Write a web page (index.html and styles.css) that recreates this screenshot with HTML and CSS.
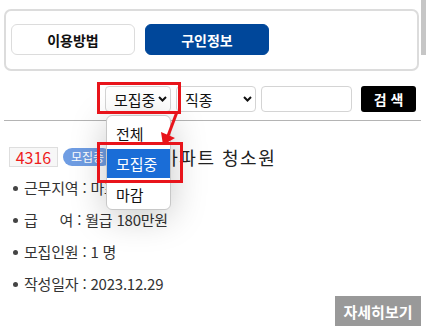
FILE: index.html
```html
<!DOCTYPE html>
<html lang="ko">
<head>
<meta charset="utf-8">
<link rel="stylesheet" href="styles.css">
</head>
<body>
<div class="page">
  <div class="tabs">
    <button class="tab">이용방법</button>
    <button class="tab tab-active">구인정보</button>
  </div>
  <div class="search">
    <div class="sel sel-status"><span>모집중</span><svg class="chev" width="9" height="6" viewBox="0 0 9 6"><path d="M1 1 L4.5 4.5 L8 1" fill="none" stroke="#111" stroke-width="2"/></svg></div>
    <div class="sel sel-job"><span>직종</span><svg class="chev" width="9" height="6" viewBox="0 0 9 6"><path d="M1 1 L4.5 4.5 L8 1" fill="none" stroke="#111" stroke-width="2"/></svg></div>
    <div class="field"></div>
    <button class="btn-search">검 색</button>
  </div>
  <div class="divider"></div>
  <div class="card">
    <div class="card-head">
      <span class="num">4316</span>
      <span class="badge">모집중</span>
      <span class="title">한강변아파트 청소원</span>
    </div>
    <ul class="info">
      <li><span class="dot"></span>근무지역 : 마포구</li>
      <li><span class="dot"></span>급<span class="sp"></span>여 : 월급 180만원</li>
      <li><span class="dot"></span>모집인원 : 1 명</li>
      <li><span class="dot"></span>작성일자 : 2023.12.29</li>
    </ul>
    <div class="card-foot"><button class="more">자세히보기</button></div>
  </div>

  <div class="dropdown">
    <div class="opt">전체</div>
    <div class="opt opt-on">모집중</div>
    <div class="opt">마감</div>
  </div>
  <div class="mark mark-select"></div>
  <div class="mark mark-option"></div>
  <svg class="arrow" width="30" height="40" viewBox="0 0 30 40">
    <line x1="24" y1="0" x2="15" y2="24" stroke="#e8141b" stroke-width="3"/>
    <polygon points="8,20 22,26 10,33" fill="#e8141b"/>
  </svg>
  <div class="scrollbar"></div>
</div>
</body>
</html>
```

FILE: styles.css
```css
* { box-sizing: border-box; }
html, body { margin: 0; padding: 0; background: #fff; }
body {
  font-family: "Noto Sans CJK KR", "Noto Sans", sans-serif;
  color: #333;
  width: 426px;
  height: 332px;
  overflow: hidden;
}
.page { position: relative; width: 426px; height: 332px; padding-top: 9px; }

.tabs {
  margin: 0 7px 0 4px;
  height: 62px;
  border: 2px solid #dcdcdc;
  border-radius: 7px;
  padding: 13px 5px;
  display: flex;
  gap: 10px;
}
.tab {
  width: 124px;
  height: 31px;
  border: 1px solid #dcdcdc;
  border-radius: 6px;
  background: #fff;
  font-family: inherit;
  font-size: 14px;
  font-weight: 700;
  color: #111;
  line-height: 1;
  padding: 0;
}
.tab-active { background: #00479a; border-color: #00479a; color: #fff; }

.search {
  margin-top: 15px;
  padding-right: 10px;
  display: flex;
  justify-content: flex-end;
  align-items: center;
  height: 26px;
}
.sel {
  height: 26px;
  border: 1px solid #d4d4d4;
  border-radius: 4px;
  display: flex;
  align-items: center;
  justify-content: space-between;
  font-size: 15px;
  color: #111;
  line-height: 1;
}
.sel-status { width: 66px; padding: 0 3px 0 8px; }
.sel-job { width: 80px; margin-left: 5px; padding: 0 3px 0 8px; }
.field {
  width: 91px;
  height: 26px;
  margin-left: 5px;
  border: 1px solid #d4d4d4;
  border-radius: 4px;
}
.btn-search {
  width: 55px;
  height: 26px;
  margin-left: 9px;
  background: #000;
  color: #fff;
  border: 0;
  border-radius: 3px;
  font-family: inherit;
  font-size: 14px;
  font-weight: 700;
  padding: 0;
  line-height: 1;
}

.divider { margin: 8px 5px 0 4px; height: 1px; background: #b4b4b4; }

.card { padding: 0 5px 0 9px; }
.card-head {
  margin-top: 26px;
  height: 20px;
  display: flex;
  align-items: center;
  gap: 5px;
}
.num {
  height: 20px;
  width: 49px;
  border: 1px solid #dedede;
  background: #f7f7f7;
  color: #ee1c1c;
  font-size: 16px;
  line-height: 18px;
  text-align: center;
}
.badge {
  height: 18px;
  padding: 0 8px;
  border-radius: 9px;
  background: #6f9de3;
  color: #fff;
  font-size: 12px;
  line-height: 18px;
}
.title { font-size: 18px; color: #222; line-height: 20px; margin-left: -10px; letter-spacing: 1.5px; }

.info { list-style: none; margin: 11px 0 0; padding: 0 0 0 4px; display: flex; flex-direction: column; gap: 12px; }
.info li {
  height: 20px;
  display: flex;
  align-items: center;
  font-size: 15px;
  line-height: 20px;
  color: #333;
  letter-spacing: -0.2px;
}
.dot { width: 5px; height: 5px; border-radius: 50%; background: #444; margin-right: 6px; }
.sp { display: inline-block; width: 22px; }

.card-foot { display: flex; justify-content: flex-end; margin-top: 2px; }
.more {
  width: 86px;
  height: 30px;
  border: 0;
  background: #999;
  color: #fff;
  font-family: inherit;
  font-size: 15px;
  font-weight: 700;
  padding: 0;
  line-height: 1;
}

.dropdown {
  position: absolute;
  left: 106px;
  top: 115px;
  width: 65px;
  height: 95px;
  background: #fff;
  border: 1px solid #c8c8c8;
  border-radius: 6px;
  box-shadow: 0 6px 36px rgba(0,0,0,0.22);
  padding-top: 1px;
  overflow: hidden;
}
.opt {
  height: 32px;
  padding-left: 9px;
  display: flex;
  align-items: center;
  font-size: 15px;
  color: #111;
}
.opt-on { background: #1a6dd7; color: #fff; height: 29px; }

.mark { position: absolute; border: 3px solid #e8141b; }
.mark-select { left: 97px; top: 82px; width: 84px; height: 32px; }
.mark-option { left: 97px; top: 142px; width: 86px; height: 41px; }

.arrow { position: absolute; left: 153px; top: 112px; }

.scrollbar {
  position: absolute;
  right: 0;
  top: 0;
  width: 5px;
  height: 55px;
  background: #c6c6c6;
}
```
